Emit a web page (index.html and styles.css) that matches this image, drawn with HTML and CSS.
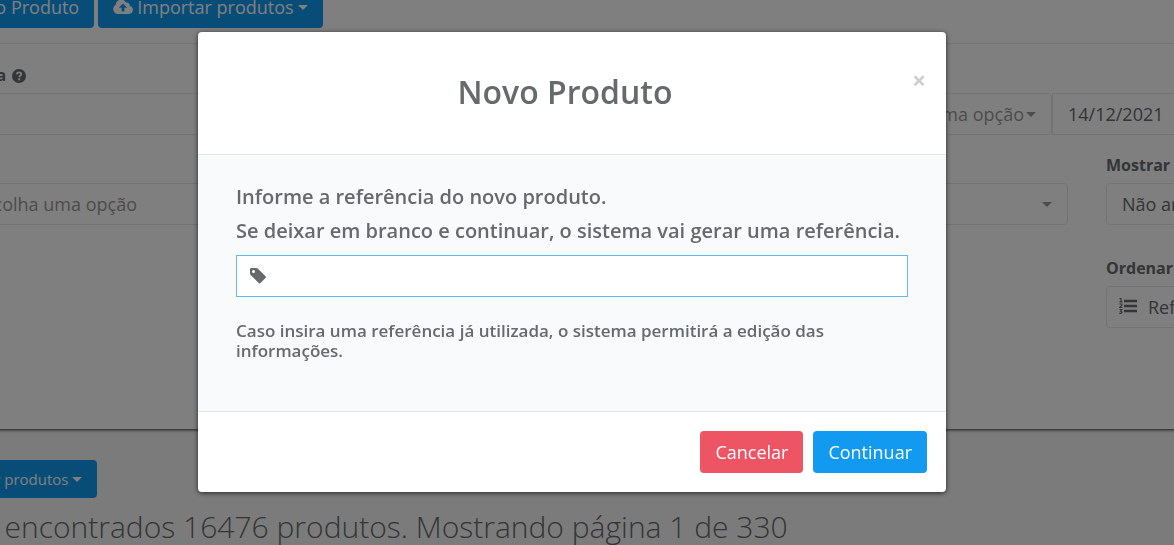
FILE: index.html
```
<!DOCTYPE html>
<html lang="pt-br">

<head>
    <meta charset="UTF-8">
    <title>Produtos</title>
    <meta name="viewport" content="width=device-width, initial-scale=1.0">

    <link rel="stylesheet" href="styles.css">
</head>

<body>
    <div class="page">
        <div class="panel">
            <div class="toolbar">
                <button type="button" class="btn btn-primary">Novo Produto</button>
                <button type="button" class="btn btn-primary">
                    <svg class="icon-cloud" viewBox="0 0 20 14"><path fill="currentColor" fill-rule="evenodd" d="M5 14a5 5 0 0 1-2.300-9.300A5.500 5.500 0 0 1 13 2.500a3 3 0 0 1 3.700 3.600A4 4 0 0 1 16 14zM10 3.500L5.800 7.700h2.800V11.500h2.800V7.700h2.800z"/></svg>
                    Importar produtos
                    <span class="caret"></span>
                </button>
            </div>

            <form class="filters">
                <div>
                    <label for="busca">Busca
                        <svg class="icon-help" viewBox="0 0 14 14"><circle cx="7" cy="7" r="7" fill="currentColor"/><path d="M4.800 5.300C5 3.900 6 3.300 7.100 3.300c1.300 0 2.200.8 2.200 1.900C9.300 6.700 7.200 6.700 7.200 8.300" fill="none" stroke="#fff" stroke-width="1.700"/><rect x="6.200" y="9.300" width="2" height="2" fill="#fff"/></svg>
                    </label>
                    <div class="search-row">
                        <input type="text" id="busca" class="field">
                        <div class="select select-option">
                            <select class="field muted" aria-label="Opção"><option>Escolha uma opção</option></select>
                        </div>
                        <input type="text" class="field date" value="14/12/2021" aria-label="Data">
                    </div>
                </div>

                <div class="filter-row">
                    <div class="select no-label">
                        <select class="field muted" aria-label="Categoria"><option>Escolha uma opção</option></select>
                    </div>
                    <div class="select no-label">
                        <select class="field muted" aria-label="Marca"><option></option></select>
                    </div>
                    <div class="last-column">
                        <div>
                            <label for="mostrar">Mostrar</label>
                            <div class="select">
                                <select id="mostrar" class="field"><option>Não arquivados</option></select>
                            </div>
                        </div>
                        <div>
                            <label for="ordenar">Ordenar</label>
                            <div class="select order">
                                <svg class="icon-list" viewBox="0 0 18 18"><g fill="none" stroke="currentColor"><path stroke-width="2.600" d="M5 4h13M5 9h13M5 14h13"/><path stroke-width="1.200" d="M.5 1.500H2v3.500M.3 5h3.200M.5 7h2.300v1.300L.7 10.500h2.600M.5 12.500h2.300l-1.200 1.700c2 0 1.700 2.800-1.300 2"/></g></svg>
                                <select id="ordenar" class="field"><option>Referência</option></select>
                            </div>
                        </div>
                    </div>
                </div>
            </form>
        </div>

        <div class="results">
            <button type="button" class="btn btn-primary btn-small">Exportar produtos <span class="caret"></span></button>
            <h2>Foram encontrados 16476 produtos. Mostrando página 1 de 330</h2>
        </div>
    </div>

    <!-- Modal -->
    <div class="overlay">
        <form class="modal" role="dialog" aria-labelledby="titulo">
            <div class="modal-header">
                <h1 id="titulo">Novo Produto</h1>
                <button type="button" class="close" aria-label="Fechar">&times;</button>
            </div>
            <div class="modal-body">
                <label for="referencia">Informe a referência do novo produto.<br>Se deixar em branco e continuar, o sistema vai gerar uma referência.</label>
                <div class="reference">
                    <svg class="icon-tag" viewBox="0 0 16 16"><path fill="currentColor" fill-rule="evenodd" d="M0 1.300Q0 0 1.300 0H6.300Q7.200 0 8 .8L15.500 8.300Q16.300 9.200 15.500 10L10.500 15Q9.600 15.800 8.700 15L.8 7.200Q0 6.400 0 5.500zM3.500 2a1.500 1.500 0 1 0 0 3a1.500 1.500 0 0 0 0-3z"/></svg>
                    <input type="text" id="referencia">
                </div>
                <p>Caso insira uma referência já utilizada, o sistema permitirá a edição das informações.</p>
            </div>
            <div class="modal-footer">
                <button type="button" class="btn btn-danger">Cancelar</button>
                <button type="submit" class="btn btn-primary">Continuar</button>
            </div>
        </form>
    </div>
</body>

</html>
```
FILE: styles.css
```
* {
    box-sizing: border-box;
    margin: 0;
    padding: 0;
}

body {
    background-color: #f7f7f7;
    color: #676a6c;
    font-family: "Open Sans", sans-serif;
    font-size: 18px;
    overflow: hidden;
}

button,
input,
select {
    font: inherit;
    color: inherit;
}

.page {
    margin: -14px -200px 0 -53px;
}

.panel {
    background-color: white;
    height: 443px;
    box-shadow: 0 1px 3px rgba(0, 0, 0, 0.8);
}

.toolbar {
    display: flex;
    gap: 4px;
    padding-bottom: 15px;
    border-bottom: 1px solid #e7eaec;
}

.btn {
    display: inline-flex;
    align-items: center;
    height: 42px;
    padding: 0 15px;
    border: none;
    border-radius: 4px;
    color: white;
    white-space: nowrap;
    cursor: pointer;
}

.btn-primary {
    background-color: #119af0;
}

.btn-danger {
    background-color: #ed5565;
}

.btn-small {
    height: 38px;
    padding-left: 30px;
    font-size: 15px;
}

.caret {
    margin-left: 4px;
    border: 5px solid transparent;
    border-top-color: currentColor;
    border-bottom: none;
}

.icon-cloud {
    width: 20px;
    height: 14px;
    margin-right: 4px;
}

.filters {
    padding: 20px 0 0 12px;
}

.filters label {
    display: block;
    height: 29px;
    font-size: 16px;
    font-weight: bold;
    line-height: 22px;
}

.icon-help {
    width: 14px;
    height: 14px;
    margin-left: 2px;
    vertical-align: -2px;
}

.field {
    display: block;
    width: 100%;
    height: 42px;
    padding: 0 15px;
    background-color: white;
    border: 1px solid #e5e6e7;
    appearance: none;
}

.muted {
    color: #999;
}

.search-row {
    display: flex;
}

.select {
    position: relative;
}

.select .field {
    border-radius: 4px;
}

.select::after {
    content: "";
    position: absolute;
    top: 19px;
    right: 16px;
    border: 5px solid transparent;
    border-top-color: #999;
    border-bottom: none;
}

.select-option {
    flex: 0 0 206px;
}

.search-row .date {
    flex: 0 0 322px;
}

.filter-row {
    display: grid;
    grid-template-columns: 1fr 1fr 268px;
    gap: 38px;
    align-items: start;
    margin-top: 19px;
}

.no-label {
    margin-top: 29px;
}

.last-column {
    display: grid;
    gap: 32px;
}

.order .field {
    padding-left: 41px;
}

.icon-list {
    position: absolute;
    top: 11px;
    left: 13px;
    width: 18px;
    height: 18px;
}

.results {
    margin-left: -37px;
    padding-top: 31px;
}

.results h2 {
    margin-top: 8px;
    font-size: 30px;
    font-weight: 300;
    line-height: 42px;
}

.overlay {
    position: fixed;
    inset: 0;
    padding: 32px 30px 0 0;
    background-color: rgba(0, 0, 0, 0.5);
}

.modal {
    max-width: 748px;
    margin: 0 auto;
    background-color: white;
    border-radius: 4px;
    box-shadow: 0 1px 5px rgba(0, 0, 0, 0.7);
}

.modal-header {
    display: flex;
    align-items: flex-start;
    padding: 36px 20px 38px;
}

.modal-header h1 {
    flex: 1;
    font-size: 32px;
    font-weight: 600;
    line-height: 48px;
    text-align: center;
}

.close {
    width: 14px;
    background: none;
    border: none;
    color: #ccc;
    font-size: 24px;
    font-weight: bold;
    line-height: 24px;
    cursor: pointer;
}

.modal-body {
    padding: 25px 38px 50px;
    background-color: #f8fafc;
    border-top: 1px solid #e5e5e5;
    border-bottom: 1px solid #e5e5e5;
    font-weight: 600;
}

.modal-body label {
    display: block;
    font-size: 20px;
    line-height: 34px;
}

.modal-body p {
    margin-top: 24px;
    font-size: 17px;
    line-height: 20px;
}

.reference {
    display: flex;
    align-items: center;
    gap: 12px;
    height: 42px;
    margin-top: 7px;
    padding: 0 13px;
    background-color: white;
    border: 1px solid #66b7ec;
}

.reference input {
    flex: 1;
    border: none;
    outline: none;
}

.icon-tag {
    width: 16px;
    height: 16px;
}

.modal-footer {
    display: flex;
    justify-content: flex-end;
    gap: 10px;
    padding: 19px;
}
```
